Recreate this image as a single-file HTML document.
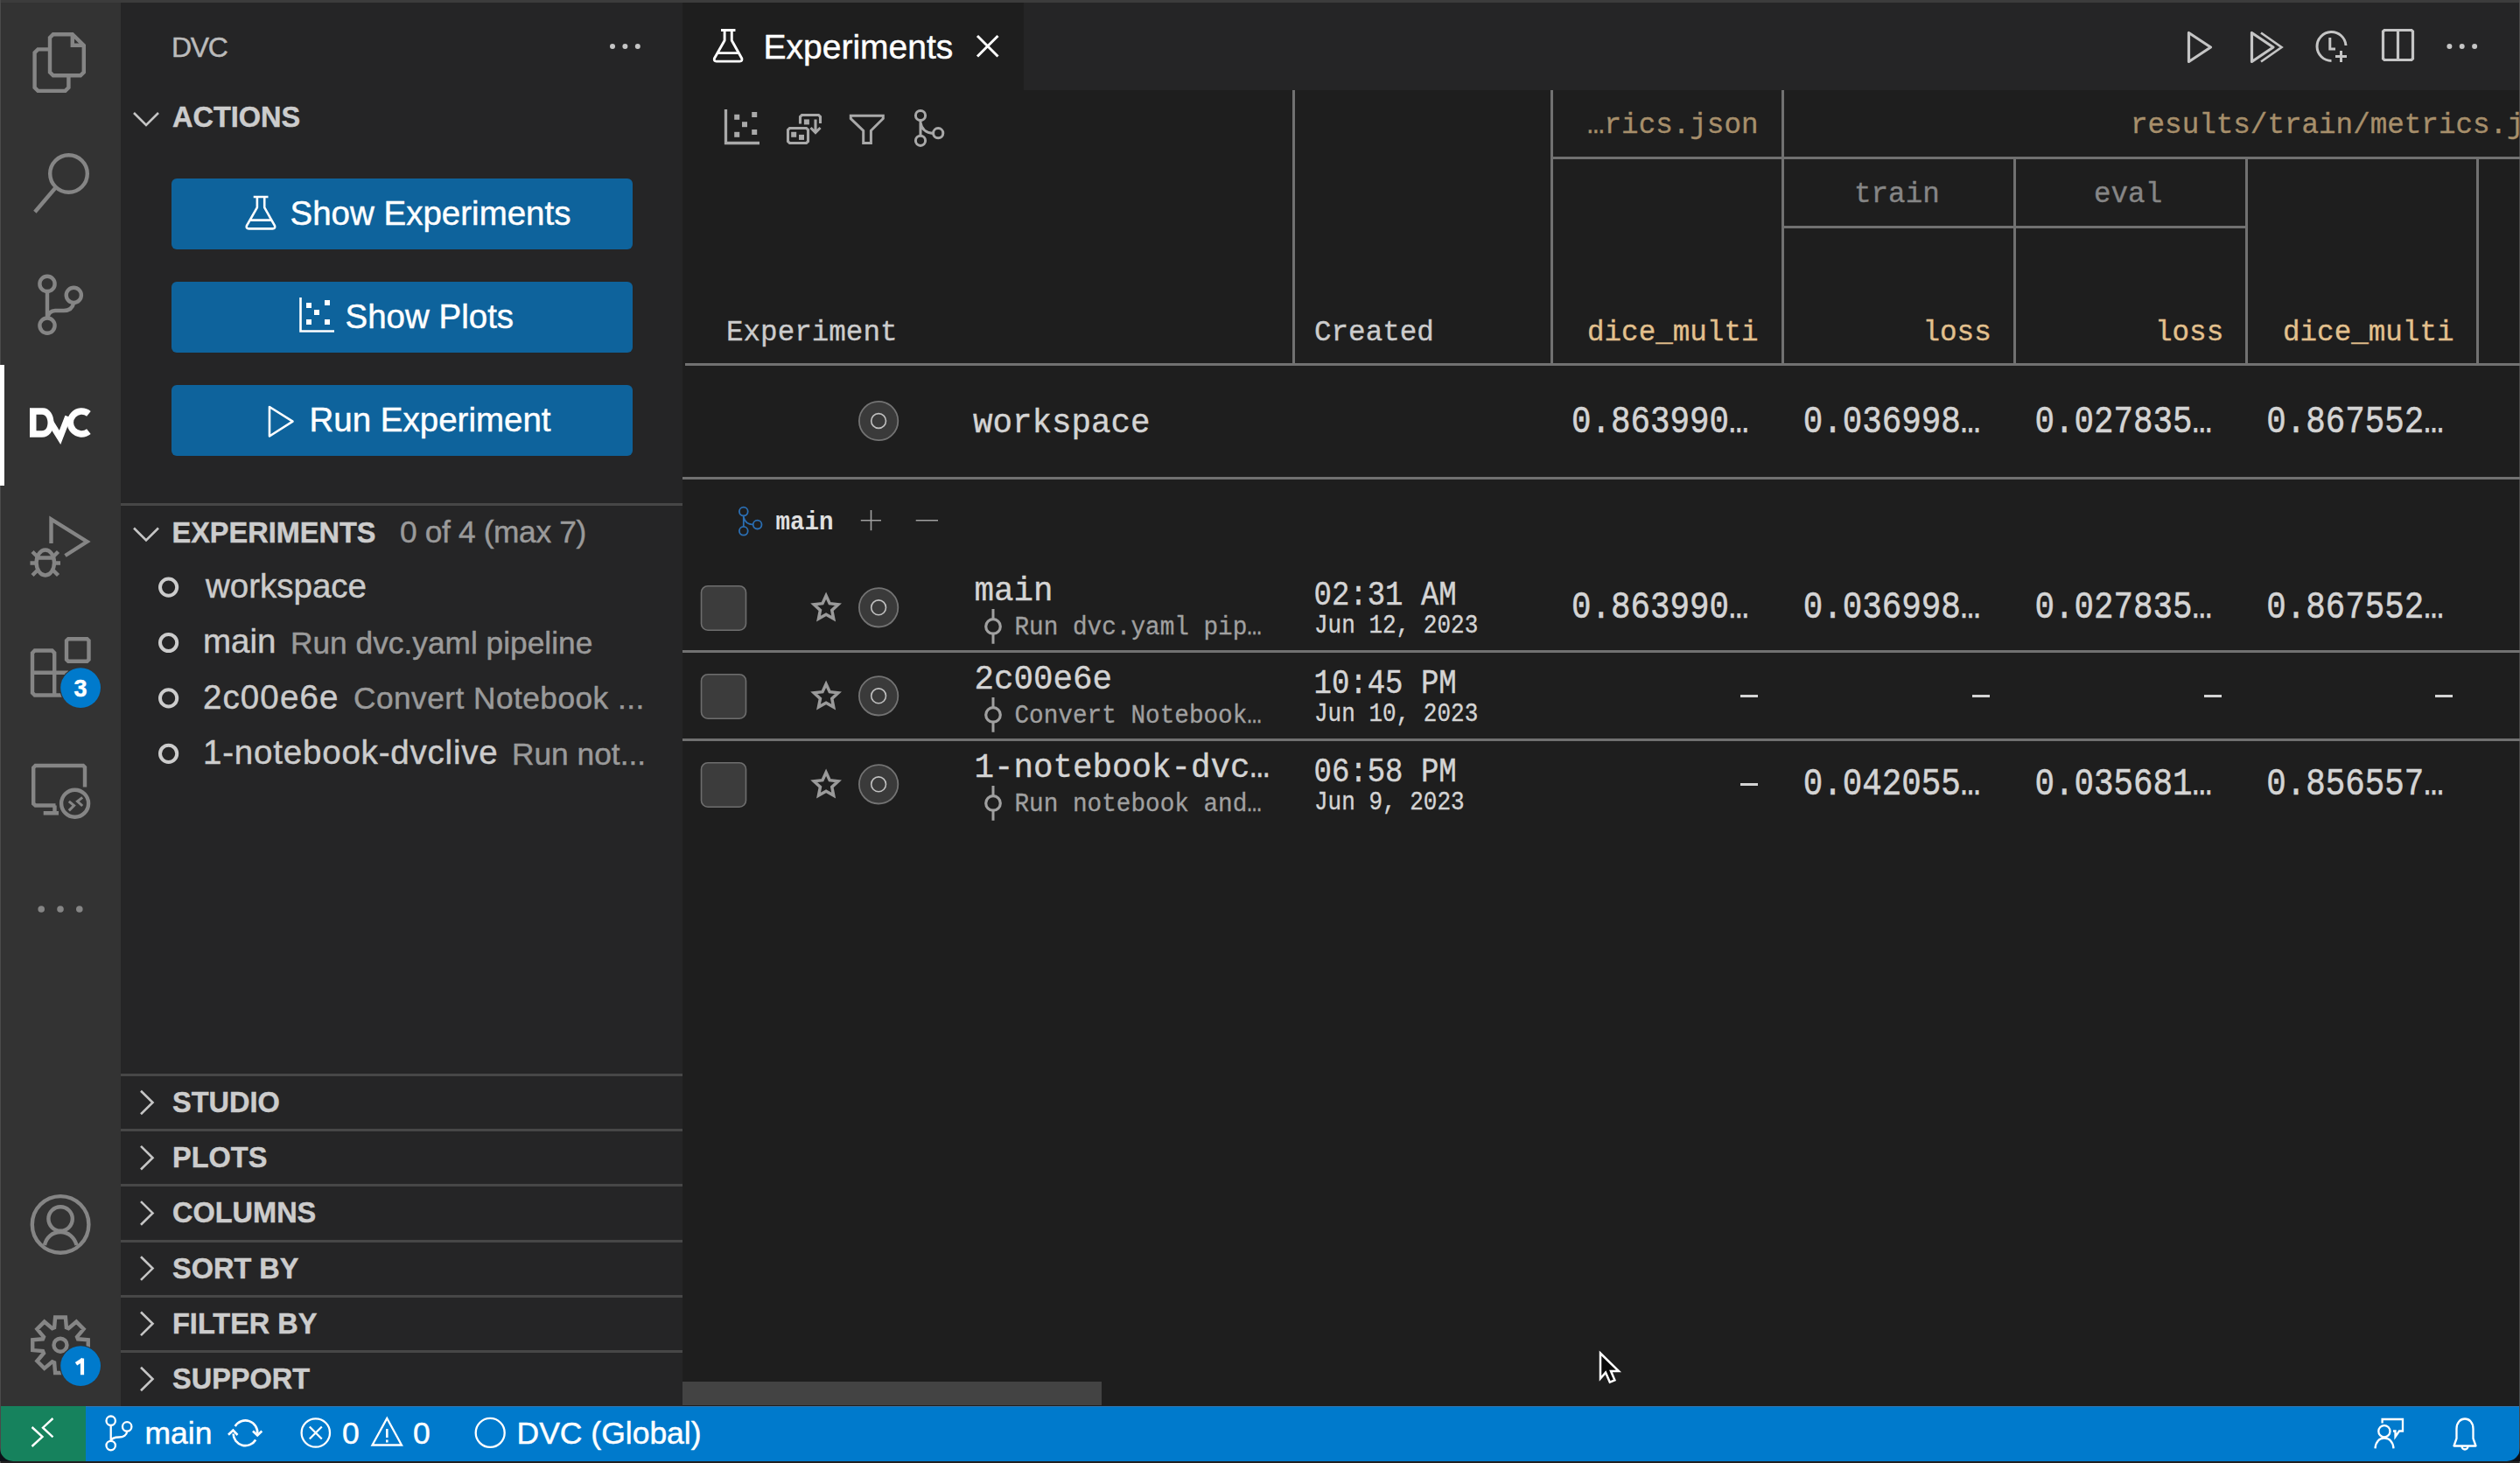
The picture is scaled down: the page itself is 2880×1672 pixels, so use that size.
<!DOCTYPE html>
<html><head><meta charset="utf-8"><title>DVC Experiments</title>
<style>
html,body{margin:0;padding:0;width:2880px;height:1672px;overflow:hidden;background:#1e1e1e;}
#root{position:relative;width:2880px;height:1672px;overflow:hidden;}
</style></head><body><div id="root">
<div style="position:absolute;left:0px;top:0px;width:2880px;height:1672px;background:#1e1e1e;"></div>
<div style="position:absolute;left:0px;top:0px;width:138px;height:1607px;background:#333333;"></div>
<div style="position:absolute;left:138px;top:0px;width:642px;height:1607px;background:#252526;"></div>
<div style="position:absolute;left:780px;top:0px;width:2100px;height:103px;background:#252526;"></div>
<div style="position:absolute;left:780px;top:0px;width:390px;height:103px;background:#1e1e1e;"></div>
<div style="position:absolute;left:0px;top:1607px;width:2880px;height:63px;background:#007acc;"></div>
<div style="position:absolute;left:0px;top:1607px;width:98px;height:63px;background:#16825d;"></div>
<div style="position:absolute;left:98px;top:1607px;width:2782px;height:1px;background:#2f78b5;"></div>
<div style="position:absolute;left:0px;top:1670px;width:2880px;height:2px;background:#202020;"></div>
<div style="position:absolute;left:0px;top:0px;width:2880px;height:3px;background:#3c3c3c;"></div>
<div style="position:absolute;left:0px;top:0px;width:1px;height:1672px;background:#4a4a4a;"></div>
<div style="position:absolute;left:2879px;top:0px;width:1px;height:1672px;background:#4a4a4a;"></div>
<div style="position:absolute;left:0px;top:417px;width:5px;height:138px;background:#ffffff;"></div>
<div style="position:absolute;left:196.00px;top:38.00px;font-family:'Liberation Sans', sans-serif;font-size:32px;line-height:1;font-weight:normal;color:#bbbbbb;white-space:pre;letter-spacing:-1.4px;-webkit-text-stroke:0.45px #bbbbbb;">DVC</div>
<div style="position:absolute;left:197.00px;top:118.38px;font-family:'Liberation Sans', sans-serif;font-size:32.5px;line-height:1;font-weight:bold;color:#cccccc;white-space:pre;-webkit-text-stroke:0.45px #cccccc;">ACTIONS</div>
<div style="position:absolute;left:196px;top:204px;width:527px;height:81px;background:#0e639c;border-radius:6px;"></div>
<div style="position:absolute;left:331.50px;top:225.47px;font-family:'Liberation Sans', sans-serif;font-size:38.5px;line-height:1;font-weight:normal;color:#ffffff;white-space:pre;-webkit-text-stroke:0.45px #ffffff;">Show Experiments</div>
<div style="position:absolute;left:196px;top:322px;width:527px;height:81px;background:#0e639c;border-radius:6px;"></div>
<div style="position:absolute;left:394.50px;top:343.47px;font-family:'Liberation Sans', sans-serif;font-size:38.5px;line-height:1;font-weight:normal;color:#ffffff;white-space:pre;-webkit-text-stroke:0.45px #ffffff;">Show Plots</div>
<div style="position:absolute;left:196px;top:440px;width:527px;height:81px;background:#0e639c;border-radius:6px;"></div>
<div style="position:absolute;left:353.50px;top:461.47px;font-family:'Liberation Sans', sans-serif;font-size:38.5px;line-height:1;font-weight:normal;color:#ffffff;white-space:pre;-webkit-text-stroke:0.45px #ffffff;">Run Experiment</div>
<div style="position:absolute;left:138px;top:575px;width:642px;height:3px;background:#474747;"></div>
<div style="position:absolute;left:196.50px;top:592.58px;font-family:'Liberation Sans', sans-serif;font-size:32.5px;line-height:1;font-weight:bold;color:#cccccc;white-space:pre;-webkit-text-stroke:0.45px #cccccc;">EXPERIMENTS</div>
<div style="position:absolute;left:457.00px;top:590.20px;font-family:'Liberation Sans', sans-serif;font-size:35.3px;line-height:1;font-weight:normal;color:#9a9a9a;white-space:pre;letter-spacing:-0.35px;-webkit-text-stroke:0.45px #9a9a9a;">0 of 4 (max 7)</div>
<div style="position:absolute;left:235.00px;top:650.88px;font-family:'Liberation Sans', sans-serif;font-size:38.5px;line-height:1;font-weight:normal;color:#cccccc;white-space:pre;-webkit-text-stroke:0.45px #cccccc;">workspace</div>
<div style="position:absolute;left:232.00px;top:714.27px;font-family:'Liberation Sans', sans-serif;font-size:38.5px;line-height:1;font-weight:normal;color:#cccccc;white-space:pre;-webkit-text-stroke:0.45px #cccccc;">main</div>
<div style="position:absolute;left:332.00px;top:717.00px;font-family:'Liberation Sans', sans-serif;font-size:35.3px;line-height:1;font-weight:normal;color:#9a9a9a;white-space:pre;-webkit-text-stroke:0.45px #9a9a9a;">Run dvc.yaml pipeline</div>
<div style="position:absolute;left:232.00px;top:777.67px;font-family:'Liberation Sans', sans-serif;font-size:38.5px;line-height:1;font-weight:normal;color:#cccccc;white-space:pre;letter-spacing:1.1px;-webkit-text-stroke:0.45px #cccccc;">2c00e6e</div>
<div style="position:absolute;left:404.00px;top:780.39px;font-family:'Liberation Sans', sans-serif;font-size:35.3px;line-height:1;font-weight:normal;color:#9a9a9a;white-space:pre;letter-spacing:0.45px;-webkit-text-stroke:0.45px #9a9a9a;">Convert Notebook ...</div>
<div style="position:absolute;left:232.00px;top:841.07px;font-family:'Liberation Sans', sans-serif;font-size:38.5px;line-height:1;font-weight:normal;color:#cccccc;white-space:pre;letter-spacing:0.8px;-webkit-text-stroke:0.45px #cccccc;">1-notebook-dvclive</div>
<div style="position:absolute;left:585.00px;top:843.79px;font-family:'Liberation Sans', sans-serif;font-size:35.3px;line-height:1;font-weight:normal;color:#9a9a9a;white-space:pre;-webkit-text-stroke:0.45px #9a9a9a;">Run not...</div>
<div style="position:absolute;left:138px;top:1227px;width:642px;height:3px;background:#474747;"></div>
<div style="position:absolute;left:197.00px;top:1243.97px;font-family:'Liberation Sans', sans-serif;font-size:32.5px;line-height:1;font-weight:bold;color:#cccccc;white-space:pre;-webkit-text-stroke:0.45px #cccccc;">STUDIO</div>
<div style="position:absolute;left:138px;top:1290px;width:642px;height:3px;background:#474747;"></div>
<div style="position:absolute;left:197.00px;top:1307.17px;font-family:'Liberation Sans', sans-serif;font-size:32.5px;line-height:1;font-weight:bold;color:#cccccc;white-space:pre;-webkit-text-stroke:0.45px #cccccc;">PLOTS</div>
<div style="position:absolute;left:138px;top:1353px;width:642px;height:3px;background:#474747;"></div>
<div style="position:absolute;left:197.00px;top:1370.38px;font-family:'Liberation Sans', sans-serif;font-size:32.5px;line-height:1;font-weight:bold;color:#cccccc;white-space:pre;-webkit-text-stroke:0.45px #cccccc;">COLUMNS</div>
<div style="position:absolute;left:138px;top:1417px;width:642px;height:3px;background:#474747;"></div>
<div style="position:absolute;left:197.00px;top:1433.57px;font-family:'Liberation Sans', sans-serif;font-size:32.5px;line-height:1;font-weight:bold;color:#cccccc;white-space:pre;-webkit-text-stroke:0.45px #cccccc;">SORT BY</div>
<div style="position:absolute;left:138px;top:1480px;width:642px;height:3px;background:#474747;"></div>
<div style="position:absolute;left:197.00px;top:1496.77px;font-family:'Liberation Sans', sans-serif;font-size:32.5px;line-height:1;font-weight:bold;color:#cccccc;white-space:pre;-webkit-text-stroke:0.45px #cccccc;">FILTER BY</div>
<div style="position:absolute;left:138px;top:1543px;width:642px;height:3px;background:#474747;"></div>
<div style="position:absolute;left:197.00px;top:1559.97px;font-family:'Liberation Sans', sans-serif;font-size:32.5px;line-height:1;font-weight:bold;color:#cccccc;white-space:pre;-webkit-text-stroke:0.45px #cccccc;">SUPPORT</div>
<div style="position:absolute;left:872.50px;top:33.75px;font-family:'Liberation Sans', sans-serif;font-size:39px;line-height:1;font-weight:normal;color:#ffffff;white-space:pre;-webkit-text-stroke:0.45px #ffffff;">Experiments</div>
<div style="position:absolute;left:1477px;top:103px;width:3px;height:315px;background:#717171;"></div>
<div style="position:absolute;left:1772px;top:103px;width:3px;height:315px;background:#717171;"></div>
<div style="position:absolute;left:2036px;top:103px;width:3px;height:315px;background:#717171;"></div>
<div style="position:absolute;left:2301px;top:179px;width:3px;height:239px;background:#717171;"></div>
<div style="position:absolute;left:2566px;top:179px;width:3px;height:239px;background:#717171;"></div>
<div style="position:absolute;left:2830px;top:179px;width:3px;height:239px;background:#717171;"></div>
<div style="position:absolute;left:1772px;top:179px;width:1108px;height:3px;background:#717171;"></div>
<div style="position:absolute;left:2036px;top:258px;width:533px;height:3px;background:#717171;"></div>
<div style="position:absolute;left:783px;top:415px;width:2097px;height:3px;background:#717171;"></div>
<div style="position:absolute;left:780px;top:545px;width:2100px;height:3px;background:#717171;"></div>
<div style="position:absolute;left:780px;top:743px;width:2100px;height:3px;background:#717171;"></div>
<div style="position:absolute;left:780px;top:844px;width:2100px;height:3px;background:#717171;"></div>
<div style="position:absolute;left:830.00px;top:365.42px;font-family:'Liberation Mono', monospace;font-size:32.6px;line-height:1;font-weight:normal;color:#cccccc;white-space:pre;-webkit-text-stroke:0.35px #cccccc;">Experiment</div>
<div style="position:absolute;left:1502.00px;top:365.42px;font-family:'Liberation Mono', monospace;font-size:32.6px;line-height:1;font-weight:normal;color:#cccccc;white-space:pre;-webkit-text-stroke:0.35px #cccccc;">Created</div>
<div style="position:absolute;left:1814.00px;top:128.02px;font-family:'Liberation Mono', monospace;font-size:32.6px;line-height:1;font-weight:normal;color:#a78f6b;white-space:pre;-webkit-text-stroke:0.35px #a78f6b;">…rics.json</div>
<div style="position:absolute;left:2435.00px;top:128.02px;font-family:'Liberation Mono', monospace;font-size:32.6px;line-height:1;font-weight:normal;color:#a78f6b;white-space:pre;-webkit-text-stroke:0.35px #a78f6b;">results/train/metrics.json</div>
<div style="position:absolute;left:2119.00px;top:207.42px;font-family:'Liberation Mono', monospace;font-size:32.6px;line-height:1;font-weight:normal;color:#868686;white-space:pre;-webkit-text-stroke:0.35px #868686;">train</div>
<div style="position:absolute;left:2393.00px;top:207.42px;font-family:'Liberation Mono', monospace;font-size:32.6px;line-height:1;font-weight:normal;color:#868686;white-space:pre;-webkit-text-stroke:0.35px #868686;">eval</div>
<div style="position:absolute;left:1814.00px;top:365.42px;font-family:'Liberation Mono', monospace;font-size:32.6px;line-height:1;font-weight:normal;color:#e2c08d;white-space:pre;-webkit-text-stroke:0.35px #e2c08d;">dice_multi</div>
<div style="position:absolute;left:2197.50px;top:365.42px;font-family:'Liberation Mono', monospace;font-size:32.6px;line-height:1;font-weight:normal;color:#e2c08d;white-space:pre;-webkit-text-stroke:0.35px #e2c08d;">loss</div>
<div style="position:absolute;left:2463.00px;top:365.42px;font-family:'Liberation Mono', monospace;font-size:32.6px;line-height:1;font-weight:normal;color:#e2c08d;white-space:pre;-webkit-text-stroke:0.35px #e2c08d;">loss</div>
<div style="position:absolute;left:2609.00px;top:365.42px;font-family:'Liberation Mono', monospace;font-size:32.6px;line-height:1;font-weight:normal;color:#e2c08d;white-space:pre;-webkit-text-stroke:0.35px #e2c08d;">dice_multi</div>
<div style="position:absolute;left:1112.00px;top:465.80px;font-family:'Liberation Mono', monospace;font-size:37.5px;line-height:1;font-weight:normal;color:#d4d4d4;white-space:pre;transform:scaleY(1.05);transform-origin:0 28.50px;-webkit-text-stroke:0.4px #d4d4d4;">workspace</div>
<div style="position:absolute;left:1796.00px;top:465.80px;font-family:'Liberation Mono', monospace;font-size:37.5px;line-height:1;font-weight:normal;color:#d4d4d4;white-space:pre;transform:scaleY(1.18);transform-origin:0 28.50px;-webkit-text-stroke:0.5px #d4d4d4;">0.863990…</div>
<div style="position:absolute;left:2060.75px;top:465.80px;font-family:'Liberation Mono', monospace;font-size:37.5px;line-height:1;font-weight:normal;color:#d4d4d4;white-space:pre;transform:scaleY(1.18);transform-origin:0 28.50px;-webkit-text-stroke:0.5px #d4d4d4;">0.036998…</div>
<div style="position:absolute;left:2325.50px;top:465.80px;font-family:'Liberation Mono', monospace;font-size:37.5px;line-height:1;font-weight:normal;color:#d4d4d4;white-space:pre;transform:scaleY(1.18);transform-origin:0 28.50px;-webkit-text-stroke:0.5px #d4d4d4;">0.027835…</div>
<div style="position:absolute;left:2590.25px;top:465.80px;font-family:'Liberation Mono', monospace;font-size:37.5px;line-height:1;font-weight:normal;color:#d4d4d4;white-space:pre;transform:scaleY(1.18);transform-origin:0 28.50px;-webkit-text-stroke:0.5px #d4d4d4;">0.867552…</div>
<div style="position:absolute;left:886.50px;top:583.80px;font-family:'Liberation Mono', monospace;font-size:27.5px;line-height:1;font-weight:bold;color:#e0e0e0;white-space:pre;transform:scaleY(1.1);transform-origin:0 20.90px;">main</div>
<div style="position:absolute;left:1113.50px;top:658.40px;font-family:'Liberation Mono', monospace;font-size:37.5px;line-height:1;font-weight:normal;color:#d4d4d4;white-space:pre;transform:scaleY(1.05);transform-origin:0 28.50px;-webkit-text-stroke:0.4px #d4d4d4;">main</div>
<div style="position:absolute;left:1159.50px;top:703.95px;font-family:'Liberation Mono', monospace;font-size:27.7px;line-height:1;font-weight:normal;color:#a0a0a0;white-space:pre;transform:scaleY(1.08);transform-origin:0 21.05px;-webkit-text-stroke:0.3px #a0a0a0;">Run dvc.yaml pip…</div>
<div style="position:absolute;left:1501.50px;top:664.96px;font-family:'Liberation Mono', monospace;font-size:34px;line-height:1;font-weight:normal;color:#d4d4d4;white-space:pre;transform:scaleY(1.12);transform-origin:0 25.84px;-webkit-text-stroke:0.4px #d4d4d4;">02:31 AM</div>
<div style="position:absolute;left:1502.00px;top:703.24px;font-family:'Liberation Mono', monospace;font-size:26px;line-height:1;font-weight:normal;color:#d4d4d4;white-space:pre;transform:scaleY(1.12);transform-origin:0 19.76px;-webkit-text-stroke:0.3px #d4d4d4;">Jun 12, 2023</div>
<div style="position:absolute;left:1796.00px;top:678.20px;font-family:'Liberation Mono', monospace;font-size:37.5px;line-height:1;font-weight:normal;color:#d4d4d4;white-space:pre;transform:scaleY(1.18);transform-origin:0 28.50px;-webkit-text-stroke:0.5px #d4d4d4;">0.863990…</div>
<div style="position:absolute;left:2060.75px;top:678.20px;font-family:'Liberation Mono', monospace;font-size:37.5px;line-height:1;font-weight:normal;color:#d4d4d4;white-space:pre;transform:scaleY(1.18);transform-origin:0 28.50px;-webkit-text-stroke:0.5px #d4d4d4;">0.036998…</div>
<div style="position:absolute;left:2325.50px;top:678.20px;font-family:'Liberation Mono', monospace;font-size:37.5px;line-height:1;font-weight:normal;color:#d4d4d4;white-space:pre;transform:scaleY(1.18);transform-origin:0 28.50px;-webkit-text-stroke:0.5px #d4d4d4;">0.027835…</div>
<div style="position:absolute;left:2590.25px;top:678.20px;font-family:'Liberation Mono', monospace;font-size:37.5px;line-height:1;font-weight:normal;color:#d4d4d4;white-space:pre;transform:scaleY(1.18);transform-origin:0 28.50px;-webkit-text-stroke:0.5px #d4d4d4;">0.867552…</div>
<div style="position:absolute;left:1113.50px;top:759.40px;font-family:'Liberation Mono', monospace;font-size:37.5px;line-height:1;font-weight:normal;color:#d4d4d4;white-space:pre;transform:scaleY(1.05);transform-origin:0 28.50px;-webkit-text-stroke:0.4px #d4d4d4;">2c00e6e</div>
<div style="position:absolute;left:1159.50px;top:804.95px;font-family:'Liberation Mono', monospace;font-size:27.7px;line-height:1;font-weight:normal;color:#a0a0a0;white-space:pre;transform:scaleY(1.08);transform-origin:0 21.05px;-webkit-text-stroke:0.3px #a0a0a0;">Convert Notebook…</div>
<div style="position:absolute;left:1501.50px;top:765.96px;font-family:'Liberation Mono', monospace;font-size:34px;line-height:1;font-weight:normal;color:#d4d4d4;white-space:pre;transform:scaleY(1.12);transform-origin:0 25.84px;-webkit-text-stroke:0.4px #d4d4d4;">10:45 PM</div>
<div style="position:absolute;left:1502.00px;top:804.24px;font-family:'Liberation Mono', monospace;font-size:26px;line-height:1;font-weight:normal;color:#d4d4d4;white-space:pre;transform:scaleY(1.12);transform-origin:0 19.76px;-webkit-text-stroke:0.3px #d4d4d4;">Jun 10, 2023</div>
<div style="position:absolute;left:1989.0px;top:793.5px;width:20px;height:3px;background:#d4d4d4;"></div>
<div style="position:absolute;left:2253.75px;top:793.5px;width:20px;height:3px;background:#d4d4d4;"></div>
<div style="position:absolute;left:2518.5px;top:793.5px;width:20px;height:3px;background:#d4d4d4;"></div>
<div style="position:absolute;left:2783.25px;top:793.5px;width:20px;height:3px;background:#d4d4d4;"></div>
<div style="position:absolute;left:1113.50px;top:860.40px;font-family:'Liberation Mono', monospace;font-size:37.5px;line-height:1;font-weight:normal;color:#d4d4d4;white-space:pre;transform:scaleY(1.05);transform-origin:0 28.50px;-webkit-text-stroke:0.4px #d4d4d4;">1-notebook-dvc…</div>
<div style="position:absolute;left:1159.50px;top:905.95px;font-family:'Liberation Mono', monospace;font-size:27.7px;line-height:1;font-weight:normal;color:#a0a0a0;white-space:pre;transform:scaleY(1.08);transform-origin:0 21.05px;-webkit-text-stroke:0.3px #a0a0a0;">Run notebook and…</div>
<div style="position:absolute;left:1501.50px;top:866.96px;font-family:'Liberation Mono', monospace;font-size:34px;line-height:1;font-weight:normal;color:#d4d4d4;white-space:pre;transform:scaleY(1.12);transform-origin:0 25.84px;-webkit-text-stroke:0.4px #d4d4d4;">06:58 PM</div>
<div style="position:absolute;left:1502.00px;top:905.24px;font-family:'Liberation Mono', monospace;font-size:26px;line-height:1;font-weight:normal;color:#d4d4d4;white-space:pre;transform:scaleY(1.12);transform-origin:0 19.76px;-webkit-text-stroke:0.3px #d4d4d4;">Jun 9, 2023</div>
<div style="position:absolute;left:1989.0px;top:894.5px;width:20px;height:3px;background:#d4d4d4;"></div>
<div style="position:absolute;left:2060.75px;top:880.20px;font-family:'Liberation Mono', monospace;font-size:37.5px;line-height:1;font-weight:normal;color:#d4d4d4;white-space:pre;transform:scaleY(1.18);transform-origin:0 28.50px;-webkit-text-stroke:0.5px #d4d4d4;">0.042055…</div>
<div style="position:absolute;left:2325.50px;top:880.20px;font-family:'Liberation Mono', monospace;font-size:37.5px;line-height:1;font-weight:normal;color:#d4d4d4;white-space:pre;transform:scaleY(1.18);transform-origin:0 28.50px;-webkit-text-stroke:0.5px #d4d4d4;">0.035681…</div>
<div style="position:absolute;left:2590.25px;top:880.20px;font-family:'Liberation Mono', monospace;font-size:37.5px;line-height:1;font-weight:normal;color:#d4d4d4;white-space:pre;transform:scaleY(1.18);transform-origin:0 28.50px;-webkit-text-stroke:0.5px #d4d4d4;">0.856557…</div>
<div style="position:absolute;left:780px;top:1579px;width:479px;height:27px;background:#434343;"></div>
<div style="position:absolute;left:165.50px;top:1620.83px;font-family:'Liberation Sans', sans-serif;font-size:35.5px;line-height:1;font-weight:normal;color:#ffffff;white-space:pre;-webkit-text-stroke:0.45px #ffffff;">main</div>
<div style="position:absolute;left:391.00px;top:1621.12px;font-family:'Liberation Sans', sans-serif;font-size:35.5px;line-height:1;font-weight:normal;color:#ffffff;white-space:pre;-webkit-text-stroke:0.45px #ffffff;">0</div>
<div style="position:absolute;left:472.00px;top:1621.12px;font-family:'Liberation Sans', sans-serif;font-size:35.5px;line-height:1;font-weight:normal;color:#ffffff;white-space:pre;-webkit-text-stroke:0.45px #ffffff;">0</div>
<div style="position:absolute;left:590.50px;top:1620.92px;font-family:'Liberation Sans', sans-serif;font-size:35.5px;line-height:1;font-weight:normal;color:#ffffff;white-space:pre;-webkit-text-stroke:0.45px #ffffff;">DVC (Global)</div>
<svg style="position:absolute;left:0;top:0" width="2880" height="1672" viewBox="0 0 2880 1672">
<circle cx="700" cy="53" r="3" fill="#c5c5c5"/>
<circle cx="714.4" cy="53" r="3" fill="#c5c5c5"/>
<circle cx="728.8" cy="53" r="3" fill="#c5c5c5"/>
<path d="M153,129 L167,143 L181,129" fill="none" stroke="#c5c5c5" stroke-width="2.6"/>
<path d="M289.715,224.97 H306.496 M293.886,224.97 V237.095 L281.955,257.95 Q280.985,261.345 284.38,261.345 H311.54 Q314.935,261.345 313.965,257.95 L302.228,237.095 V224.97 M285.641,251.645 H310.279" fill="none" stroke="#ffffff" stroke-width="2.6" stroke-linejoin="round"/>
<path d="M343.5,340 V378.5 H382" fill="none" stroke="#ffffff" stroke-width="2.6"/>
<rect x="350" y="346" width="6" height="6" fill="#ffffff"/>
<rect x="359" y="354" width="6" height="6" fill="#ffffff"/>
<rect x="371" y="343" width="6" height="6" fill="#ffffff"/>
<rect x="371" y="365" width="6" height="6" fill="#ffffff"/>
<rect x="350" y="365" width="6" height="6" fill="#ffffff"/>
<path d="M308,465 V498.5 L334.5,481.7 Z" fill="none" stroke="#ffffff" stroke-width="2.6" stroke-linejoin="round"/>
<path d="M153,603.5 L167,617.5 L181,603.5" fill="none" stroke="#c5c5c5" stroke-width="2.6"/>
<circle cx="192.6" cy="671.1" r="9.6" fill="none" stroke="#cccccc" stroke-width="4"/>
<circle cx="192.6" cy="734.5" r="9.6" fill="none" stroke="#cccccc" stroke-width="4"/>
<circle cx="192.6" cy="797.9" r="9.6" fill="none" stroke="#cccccc" stroke-width="4"/>
<circle cx="192.6" cy="861.3" r="9.6" fill="none" stroke="#cccccc" stroke-width="4"/>
<path d="M161,1246.7 L174.5,1260.0 L161,1273.3" fill="none" stroke="#c5c5c5" stroke-width="2.6"/>
<path d="M161,1309.9 L174.5,1323.2 L161,1336.5" fill="none" stroke="#c5c5c5" stroke-width="2.6"/>
<path d="M161,1373.1 L174.5,1386.4 L161,1399.7" fill="none" stroke="#c5c5c5" stroke-width="2.6"/>
<path d="M161,1436.3 L174.5,1449.6 L161,1462.9" fill="none" stroke="#c5c5c5" stroke-width="2.6"/>
<path d="M161,1499.5 L174.5,1512.8 L161,1526.1" fill="none" stroke="#c5c5c5" stroke-width="2.6"/>
<path d="M161,1562.7 L174.5,1576.0 L161,1589.3" fill="none" stroke="#c5c5c5" stroke-width="2.6"/>
<path d="M57,43 L60.8,39.2 H82.8 L95.8,52 V82.5 L92,86.3 H60.8 L57,82.5 Z" fill="none" stroke="#858585" stroke-width="4.4" stroke-linejoin="miter"/>
<path d="M82.8,39.2 V51.8 H95.8" fill="none" stroke="#858585" stroke-width="4.4"/>
<path d="M57,56.4 H43.4 L39.6,60.2 V100.1 L43.4,103.9 H74.6 L78.4,100.1 V86.3" fill="none" stroke="#858585" stroke-width="4.4"/>
<circle cx="78.5" cy="198.5" r="21.3" fill="none" stroke="#858585" stroke-width="4.4"/>
<path d="M63.5,214.5 L39.9,242.2" fill="none" stroke="#858585" stroke-width="4.4"/>
<circle cx="54" cy="324.4" r="8.6" fill="none" stroke="#858585" stroke-width="4.4"/>
<circle cx="54" cy="372.1" r="8.6" fill="none" stroke="#858585" stroke-width="4.4"/>
<circle cx="84.3" cy="337.3" r="8.6" fill="none" stroke="#858585" stroke-width="4.4"/>
<path d="M54,333 V363.5 M84.3,346 C83,352 79,355 73,355 H63 C58,355 55,359 54,364" fill="none" stroke="#858585" stroke-width="4.4"/>
<path fill="#ffffff" fill-rule="evenodd" d="M34,466.3 H49 C56.5,466.3 61.5,474 61.5,483 C61.5,492.5 56,499.8 48,499.8 H34 Z M41.5,473.8 V492.3 H48 C52.5,492.3 54.5,488 54.5,483 C54.5,478 52,473.8 48,473.8 Z"/>
<path d="M58,483 L68.5,500 L77.8,476" fill="none" stroke="#ffffff" stroke-width="7.2" stroke-linejoin="miter" stroke-miterlimit="10"/>
<path d="M101.4,472.8 A13,13 0 1 0 101.4,493.2" fill="none" stroke="#ffffff" stroke-width="7.4"/>
<path d="M58.5,621 V593.5 L99.5,619 L74.5,635" fill="none" stroke="#858585" stroke-width="4.4" stroke-linejoin="miter"/>
<ellipse cx="51.8" cy="643" rx="10.2" ry="14.5" fill="none" stroke="#858585" stroke-width="4.4"/>
<path d="M41,637.5 H62.5 M37,630.5 L42.5,636 M66.5,630.5 L61,636 M34.5,643.5 H40.5 M63,643.5 H69 M37,657.5 L42.5,652 M66.5,657.5 L61,652" fill="none" stroke="#858585" stroke-width="4.4"/>
<path d="M37,746.2 L39.7,743.5 H59.5 L62.2,746.2 V794.5 H39.7 L37,791.8 Z M37,768.7 H78 M62.2,768.7 V794.5 H78 V768.7" fill="none" stroke="#858585" stroke-width="4.4"/>
<path d="M78,730.2 H99.5 L101.5,732.2 V753.8 L99.5,755.8 H78 L76,753.8 V732.2 Z" fill="none" stroke="#858585" stroke-width="4.4"/>
<circle cx="92.1" cy="786.1" r="24" fill="#333333"/>
<circle cx="92.1" cy="786.1" r="22.9" fill="#007acc"/>
<path d="M97,899.5 V877 L95,875 H40.5 L38.2,877.3 V918.5 L40.5,920.5 H63.5" fill="none" stroke="#858585" stroke-width="4.4"/>
<path d="M49.7,929.2 H67 M62.5,920.5 V929.2" fill="none" stroke="#858585" stroke-width="4.4"/>
<circle cx="85.6" cy="918.2" r="15.5" fill="none" stroke="#858585" stroke-width="4.4"/>
<path d="M78.8,915.8 L84.6,920.6 L78.8,926.4 M94.2,911.4 L88.5,915.8 L94.2,921" fill="none" stroke="#858585" stroke-width="3"/>
<circle cx="47.2" cy="1039" r="3.8" fill="#858585"/>
<circle cx="69" cy="1039" r="3.8" fill="#858585"/>
<circle cx="90.8" cy="1039" r="3.8" fill="#858585"/>
<circle cx="69.1" cy="1399.4" r="32.3" fill="none" stroke="#858585" stroke-width="4.4"/>
<circle cx="69.1" cy="1393" r="13.7" fill="none" stroke="#858585" stroke-width="4.4"/>
<path d="M51,1423 C53,1414 60,1408 69.1,1408 C78,1408 85,1414 87.5,1423" fill="none" stroke="#858585" stroke-width="4.4"/>
<path d="M62.10,1517.16 L63.11,1505.44 L74.89,1505.44 L75.90,1517.16 L78.29,1518.15 L87.29,1510.58 L95.62,1518.91 L88.05,1527.91 L89.04,1530.30 L100.76,1531.31 L100.76,1543.09 L89.04,1544.10 L88.05,1546.49 L95.62,1555.49 L87.29,1563.82 L78.29,1556.25 L75.90,1557.24 L74.89,1568.96 L63.11,1568.96 L62.10,1557.24 L59.71,1556.25 L50.71,1563.82 L42.38,1555.49 L49.95,1546.49 L48.96,1544.10 L37.24,1543.09 L37.24,1531.31 L48.96,1530.30 L49.95,1527.91 L42.38,1518.91 L50.71,1510.58 L59.71,1518.15 Z" fill="none" stroke="#858585" stroke-width="4.4" stroke-linejoin="miter"/>
<circle cx="69" cy="1537.2" r="7.5" fill="none" stroke="#858585" stroke-width="4.4"/>
<circle cx="92.1" cy="1561.1" r="24" fill="#333333"/>
<circle cx="92.1" cy="1561.1" r="22.9" fill="#007acc"/>
<path d="M94,1552.5 V1571.2 M95,1553.5 L87,1558.8" fill="none" stroke="#ffffff" stroke-width="4.2"/>
<path d="M824.025,34.45 H840.46 M828.11,34.45 V46.325 L816.425,66.75 Q815.475,70.07499999999999 818.8,70.07499999999999 H845.4 Q848.725,70.07499999999999 847.775,66.75 L836.28,46.325 V34.45 M820.035,60.575 H844.165" fill="none" stroke="#ffffff" stroke-width="2.9" stroke-linejoin="round"/>
<path d="M1117,41 L1140.5,64.5 M1140.5,41 L1117,64.5" fill="none" stroke="#ffffff" stroke-width="3"/>
<path d="M2501.5,37.5 V70.5 L2526.5,54 Z" fill="none" stroke="#c5c5c5" stroke-width="3.2" stroke-linejoin="round"/>
<path d="M2573.5,37.5 V70.5 L2598,54 Z" fill="none" stroke="#c5c5c5" stroke-width="3.2" stroke-linejoin="round"/>
<path d="M2584,37.5 L2607.5,54 L2584,70.5" fill="none" stroke="#c5c5c5" stroke-width="2.7"/>
<path d="M2664.5,69.5 A16.5,16.5 0 1 1 2681,52" fill="none" stroke="#c5c5c5" stroke-width="3"/>
<path d="M2662.8,43 V56 H2669 M2669,64.6 H2682 M2675.5,58 V71" fill="none" stroke="#c5c5c5" stroke-width="3"/>
<path d="M2725,34.5 H2756 L2757.5,36 V67 L2756,68.5 H2725 L2723.5,67 V36 Z M2740.5,34.5 V68.5" fill="none" stroke="#c5c5c5" stroke-width="3.2"/>
<circle cx="2799.4" cy="53" r="3" fill="#c5c5c5"/>
<circle cx="2813.7" cy="53" r="3" fill="#c5c5c5"/>
<circle cx="2828.1" cy="53" r="3" fill="#c5c5c5"/>
<path d="M829.5,125 V163.5 H868" fill="none" stroke="#a9a9a9" stroke-width="3.3"/>
<rect x="839.2" y="130.8" width="6" height="6" fill="#a9a9a9"/>
<rect x="848" y="139.2" width="6" height="6" fill="#a9a9a9"/>
<rect x="859.2" y="128" width="6" height="6" fill="#a9a9a9"/>
<rect x="859.2" y="148" width="6" height="6" fill="#a9a9a9"/>
<rect x="839.2" y="150.8" width="6" height="6" fill="#a9a9a9"/>
<path d="M914.5,141.5 V133.5 L916.5,131.5 H935.5 L937.5,133.5 V141" fill="none" stroke="#a9a9a9" stroke-width="3.1"/>
<rect x="918.9" y="136.4" width="6" height="6" fill="#a9a9a9"/>
<path d="M932,136.4 V150.5 M926.5,146 L932,151.5 L937.5,146" fill="none" stroke="#a9a9a9" stroke-width="3.1"/>
<path d="M902.5,146.5 H921.5 L923.5,148.5 V161.5 L921.5,163.5 H902.5 L900.5,161.5 V148.5 Z" fill="none" stroke="#a9a9a9" stroke-width="3.1"/>
<rect x="904.2" y="150.8" width="6" height="6" fill="#a9a9a9"/><rect x="913" y="153.9" width="6" height="6" fill="#a9a9a9"/>
<path d="M972.3,132.3 H1009.3 V135.5 L995.4,149.3 V163.4 H986.7 V149.3 L972.3,135.5 Z" fill="none" stroke="#a9a9a9" stroke-width="3" stroke-linejoin="miter"/>
<circle cx="1052" cy="132" r="5.6" fill="none" stroke="#a9a9a9" stroke-width="3"/>
<circle cx="1052" cy="160.8" r="5.6" fill="none" stroke="#a9a9a9" stroke-width="3"/>
<circle cx="1072.2" cy="152.2" r="5.6" fill="none" stroke="#a9a9a9" stroke-width="3"/>
<path d="M1052,137.6 V155.2 M1052,140 C1053,147 1058,152 1066.6,152.6" fill="none" stroke="#a9a9a9" stroke-width="3"/>
<circle cx="1004.1" cy="481" r="22.2" fill="#3a3a3a" stroke="#737373" stroke-width="1.8"/>
<circle cx="1004.1" cy="481" r="8.4" fill="none" stroke="#c0c0c0" stroke-width="1.6"/>
<circle cx="849.8" cy="584.6" r="4.9" fill="none" stroke="#2b6fb4" stroke-width="1.8"/>
<circle cx="849.8" cy="606.8" r="4.9" fill="none" stroke="#2b6fb4" stroke-width="1.8"/>
<circle cx="865.6" cy="599.6" r="4.9" fill="none" stroke="#2b6fb4" stroke-width="1.8"/>
<path d="M849.8,589.4 V602 M849.8,591 C851,596 855,599.4 860.8,599.6" fill="none" stroke="#2b6fb4" stroke-width="1.8"/>
<path d="M983.8,594.7 H1007 M995.5,583 V606.3 M1046.7,594.7 H1072" fill="none" stroke="#a0a0a0" stroke-width="1.6"/>
<rect x="801.5" y="669.7" width="51" height="50.5" rx="7.5" fill="#3c3c3c" stroke="#6e6e6e" stroke-width="1.6"/>
<path d="M944.10,680.70 L948.21,689.64 L957.99,690.79 L950.76,697.46 L952.68,707.11 L944.10,702.30 L935.52,707.11 L937.44,697.46 L930.21,690.79 L939.99,689.64 Z" fill="none" stroke="#9a9a9a" stroke-width="3.5" stroke-linejoin="miter"/>
<circle cx="1004.1" cy="694.3" r="22.2" fill="#3a3a3a" stroke="#737373" stroke-width="1.8"/>
<circle cx="1004.1" cy="694.3" r="8.4" fill="none" stroke="#c0c0c0" stroke-width="1.6"/>
<circle cx="1135" cy="715.9" r="8.3" fill="none" stroke="#a0a0a0" stroke-width="3.2"/>
<path d="M1135,696 V707.6 M1135,724.2 V735.7" fill="none" stroke="#a0a0a0" stroke-width="3"/>
<rect x="801.5" y="770.7" width="51" height="50.5" rx="7.5" fill="#3c3c3c" stroke="#6e6e6e" stroke-width="1.6"/>
<path d="M944.10,781.70 L948.21,790.64 L957.99,791.79 L950.76,798.46 L952.68,808.11 L944.10,803.30 L935.52,808.11 L937.44,798.46 L930.21,791.79 L939.99,790.64 Z" fill="none" stroke="#9a9a9a" stroke-width="3.5" stroke-linejoin="miter"/>
<circle cx="1004.1" cy="795.3" r="22.2" fill="#3a3a3a" stroke="#737373" stroke-width="1.8"/>
<circle cx="1004.1" cy="795.3" r="8.4" fill="none" stroke="#c0c0c0" stroke-width="1.6"/>
<circle cx="1135" cy="816.9" r="8.3" fill="none" stroke="#a0a0a0" stroke-width="3.2"/>
<path d="M1135,797 V808.6 M1135,825.2 V836.7" fill="none" stroke="#a0a0a0" stroke-width="3"/>
<rect x="801.5" y="871.7" width="51" height="50.5" rx="7.5" fill="#3c3c3c" stroke="#6e6e6e" stroke-width="1.6"/>
<path d="M944.10,882.70 L948.21,891.64 L957.99,892.79 L950.76,899.46 L952.68,909.11 L944.10,904.30 L935.52,909.11 L937.44,899.46 L930.21,892.79 L939.99,891.64 Z" fill="none" stroke="#9a9a9a" stroke-width="3.5" stroke-linejoin="miter"/>
<circle cx="1004.1" cy="896.3" r="22.2" fill="#3a3a3a" stroke="#737373" stroke-width="1.8"/>
<circle cx="1004.1" cy="896.3" r="8.4" fill="none" stroke="#c0c0c0" stroke-width="1.6"/>
<circle cx="1135" cy="917.9" r="8.3" fill="none" stroke="#a0a0a0" stroke-width="3.2"/>
<path d="M1135,898 V909.6 M1135,926.2 V937.7" fill="none" stroke="#a0a0a0" stroke-width="3"/>
<path d="M1829,1546.5 V1575.5 L1835,1568.6 L1839.8,1579.6 L1845.4,1577.3 L1841,1567 L1850,1567 Z" fill="#0a0a0a" stroke="#fff" stroke-width="2.5" stroke-linejoin="miter"/>
<path d="M36.5,1631 L48.5,1642 L36.5,1653 M60.5,1621 L49,1631.7 L60.5,1642.4" fill="none" stroke="#ffffff" stroke-width="2.4"/>
<circle cx="126.7" cy="1623.7" r="5.2" fill="none" stroke="#ffffff" stroke-width="2.3"/>
<circle cx="126.7" cy="1652.1" r="5.2" fill="none" stroke="#ffffff" stroke-width="2.3"/>
<circle cx="145.2" cy="1630.4" r="5.2" fill="none" stroke="#ffffff" stroke-width="2.3"/>
<path d="M126.7,1629 V1647 M145.2,1635.6 C145,1640 141,1642.5 136,1642.5 C131,1642.5 127.5,1644 126.7,1647" fill="none" stroke="#ffffff" stroke-width="2.3"/>
<path d="M268.7,1630 A13.8,13.8 0 0 1 294.2,1638.5 M292.2,1645.5 A13.8,13.8 0 0 1 266.6,1638.5" fill="none" stroke="#ffffff" stroke-width="2.6"/>
<path d="M289,1635.5 L294.2,1640.5 L299.3,1635.5 M261,1639.8 L266.4,1634.6 L271.5,1640" fill="none" stroke="#ffffff" stroke-width="2.6"/>
<circle cx="360.8" cy="1637.5" r="16.2" fill="none" stroke="#ffffff" stroke-width="2.3"/>
<path d="M353.8,1630.5 L367.8,1644.5 M367.8,1630.5 L353.8,1644.5" fill="none" stroke="#ffffff" stroke-width="2.3"/>
<path d="M442.3,1621 L459,1651.5 H425.5 Z" fill="none" stroke="#ffffff" stroke-width="2.3" stroke-linejoin="miter"/>
<path d="M442.3,1633 V1643 M442.3,1645.5 V1648.5" fill="none" stroke="#ffffff" stroke-width="2.6"/>
<circle cx="560.2" cy="1637.4" r="16.5" fill="none" stroke="#ffffff" stroke-width="2.3"/>
<circle cx="2724.9" cy="1635.7" r="6.6" fill="none" stroke="#ffffff" stroke-width="2.3"/>
<path d="M2714.5,1655.4 C2715,1648 2719,1643.5 2724.9,1643.5 C2731,1643.5 2735,1648 2735.5,1655.4" fill="none" stroke="#ffffff" stroke-width="2.3"/>
<path d="M2722.6,1626.5 V1622 H2746 V1635.5 H2742 L2737.5,1642 V1635.5 H2735" fill="none" stroke="#ffffff" stroke-width="2.3"/>
<path d="M2804.5,1652.5 L2807.5,1644 V1633 C2807.5,1625.5 2812,1621.5 2817,1621.5 C2822,1621.5 2826.5,1625.5 2826.5,1633 V1644 L2829.5,1652.5 Z M2813.5,1653 A3.5,3.5 0 0 0 2820.5,1653" fill="none" stroke="#ffffff" stroke-width="2.3" stroke-linejoin="round"/>
<path d="M0,1655 A15,15 0 0 0 15,1670 H0 Z" fill="#0c1118"/>
<path d="M2880,1655 A15,15 0 0 1 2865,1670 H2880 Z" fill="#0c1118"/>
</svg>
<div style="position:absolute;left:84.50px;top:773.55px;font-family:'Liberation Sans', sans-serif;font-size:27px;line-height:1;font-weight:bold;color:#ffffff;white-space:pre;-webkit-text-stroke:0.45px #ffffff;">3</div>
</div></body></html>
